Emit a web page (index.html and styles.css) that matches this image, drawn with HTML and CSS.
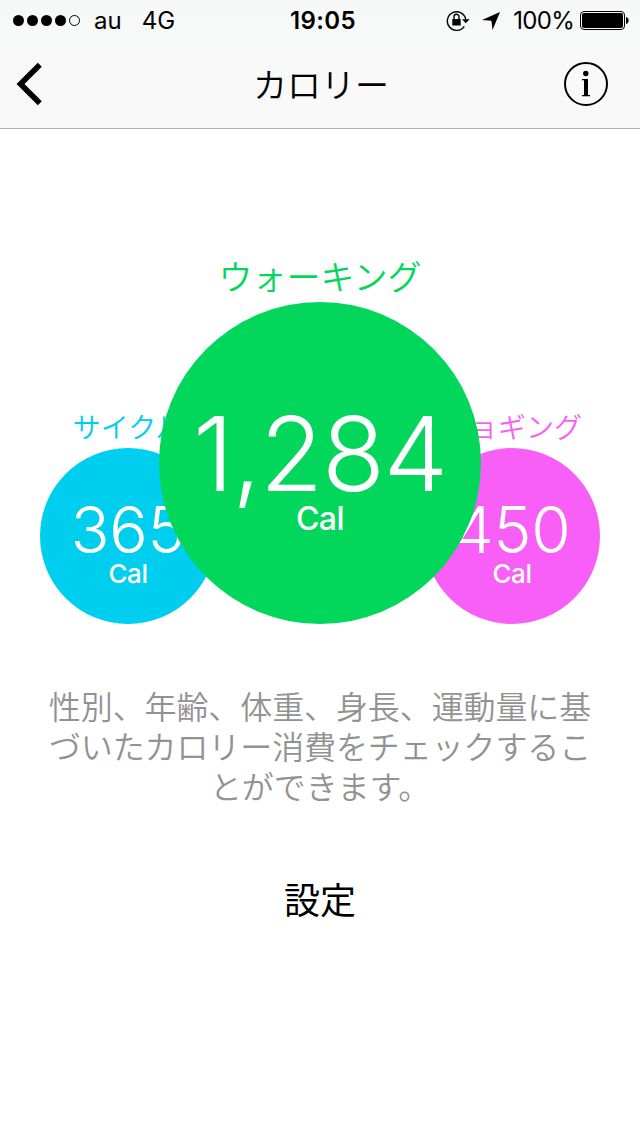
FILE: index.html
```html
<!DOCTYPE html>
<html lang="ja">
<head>
    <meta charset="UTF-8">
    <meta name="viewport" content="width=device-width, initial-scale=1.0">
    <title>カロリー</title>
    <link rel="stylesheet" href="styles.css">
</head>
<body>
    <header class="header">
        <div class="status-bar">
            <div class="status-left">
                <div class="signal">
                    <i></i><i></i><i></i><i></i><i class="empty"></i>
                </div>
                <span class="carrier">au</span>
                <span class="network">4G</span>
            </div>
            <span class="time">19:05</span>
            <div class="status-right">
                <svg class="icon-lock" width="24" height="22" viewBox="0 0 24 22">
                    <path d="M18.300 16.300A9.300 9.300 0 1 1 19.800 9.500" fill="none" stroke="#000" stroke-width="1.400"/>
                    <path d="M16 9.300h7.600L19.800 13.300z"/>
                    <rect x="6.300" y="9" width="8.400" height="6.500"/>
                    <path d="M8 9.500V6.800a2.500 2.500 0 0 1 5 0v2.700" fill="none" stroke="#000" stroke-width="1.400"/>
                </svg>
                <svg class="icon-location" width="18" height="18" viewBox="0 0 18 18">
                    <path d="M18 0L10.500 18L9.500 8.800L0 8z"/>
                </svg>
                <span class="percent">100%</span>
                <svg class="icon-battery" width="50" height="20" viewBox="0 0 50 20">
                    <rect x=".5" y=".5" width="44" height="18" rx="3.500" fill="none" stroke="#000"/>
                    <rect x="2" y="2" width="41" height="15" rx="2"/>
                    <path d="M46 6c3.500 .4 3.500 6.600 0 7z"/>
                </svg>
            </div>
        </div>
        <nav class="nav">
            <svg class="back" width="28" height="44" viewBox="0 0 28 44">
                <path d="M24.800 2.800L5.500 22L24.800 41.200" fill="none" stroke="#000" stroke-width="5.600"/>
            </svg>
            <h1>カロリー</h1>
            <svg class="info" width="44" height="44" viewBox="0 0 44 44">
                <circle cx="22" cy="22" r="21" fill="none" stroke="#000" stroke-width="2"/>
                <circle cx="21.800" cy="11.500" r="2.700"/>
                <path d="M18 17h6v16h2v1.300h-8V33h2V18.200h-2z"/>
            </svg>
        </nav>
    </header>

    <main>
        <section class="activities">
            <div class="activity cycle">
                <h2>サイクル</h2>
                <div class="circle">
                    <span class="value">365</span>
                    <span class="unit">Cal</span>
                </div>
            </div>
            <div class="activity walking">
                <h2>ウォーキング</h2>
                <div class="circle">
                    <span class="value">1,284</span>
                    <span class="unit">Cal</span>
                </div>
            </div>
            <div class="activity jogging">
                <h2>ジョギング</h2>
                <div class="circle">
                    <span class="value">450</span>
                    <span class="unit">Cal</span>
                </div>
            </div>
        </section>

        <p class="description">性別、年齢、体重、身長、運動量に基<br>づいたカロリー消費をチェックするこ<br>とができます。</p>
        <a class="settings">設定</a>
    </main>
</body>
</html>
```
FILE: styles.css
```css
* {
    box-sizing: border-box;
}
body {
    margin: 0;
    height: 1136px;
    background: #fff;
    color: #000;
    font-family: Inter, "Noto Sans CJK JP", sans-serif;
    overflow: hidden;
}
svg {
    display: block;
    flex: none;
}
h1, h2, p {
    margin: 0;
    font-family: "Noto Sans CJK JP", sans-serif;
    font-weight: 350;
}

/* header */
.header {
    height: 129px;
    background: linear-gradient(#f6f8f8, #f9f9f9 50%);
    border-bottom: 1px solid #b2b2b2;
}
.status-bar {
    display: grid;
    grid-template-columns: 1fr auto 1fr;
    align-items: center;
    height: 40px;
    padding: 1px 10px 0 13px;
    font-size: 24px;
    line-height: 30px;
}
.status-left, .status-right {
    display: flex;
    align-items: center;
}
.status-right {
    justify-content: flex-end;
}
.signal {
    display: flex;
    gap: 3px;
}
.signal i {
    width: 11px;
    height: 11px;
    border-radius: 50%;
    background: #000;
}
.signal .empty {
    background: none;
    border: 1px solid #000;
}
.carrier {
    margin-left: 14px;
}
.network {
    margin-left: 20px;
}
.time {
    padding-left: 3px;
    font-weight: 600;
    letter-spacing: 0.4px;
}
.icon-location {
    margin: 0 13px 0 12px;
}
.percent {
    letter-spacing: -0.7px;
}
.icon-battery {
    margin-left: 6px;
}
.nav {
    display: grid;
    grid-template-columns: 1fr auto 1fr;
    align-items: center;
    height: 88px;
    padding: 0 32px 0 15px;
}
.nav h1 {
    margin-left: 19px;
    font-size: 34px;
    line-height: 44px;
}
.info {
    justify-self: end;
}

/* activity circles */
.activities {
    display: flex;
    align-items: flex-end;
    justify-content: center;
    height: 495px;
}
.activity {
    width: 176px;
    color: #00ceef;
}
.activity h2 {
    font-size: 28px;
    line-height: 40px;
    padding-bottom: 2px;
    text-align: center;
    white-space: nowrap;
}
.circle {
    display: flex;
    flex-direction: column;
    align-items: center;
    height: 176px;
    padding-top: 50px;
    border-radius: 50%;
    background: currentColor;
}
.circle span {
    color: #fff;
}
.value {
    font-size: 64px;
    font-weight: 300;
    line-height: 64px;
    letter-spacing: -0.3px;
}
.unit {
    font-size: 26px;
    font-weight: 500;
    line-height: 24px;
    letter-spacing: -0.5px;
}
.jogging {
    color: #f75ff6;
}
.walking {
    z-index: 1;
    width: 322px;
    margin: 0 -57px;
    color: #02d75b;
}
.walking h2 {
    font-size: 34px;
    line-height: 48px;
}
.walking .circle {
    height: 322px;
    padding-top: 100px;
}
.walking .value {
    font-size: 103px;
    line-height: 104px;
    letter-spacing: -1.300px;
}
.walking .unit {
    font-size: 32px;
    line-height: 26px;
}

.description {
    margin-top: 61px;
    color: #929292;
    font-size: 32px;
    line-height: 40px;
    letter-spacing: -0.1px;
    text-align: center;
    white-space: nowrap;
}
.settings {
    display: block;
    margin-top: 68px;
    font-family: "Noto Sans CJK JP", sans-serif;
    font-size: 36px;
    line-height: 50px;
    text-align: center;
}
```
